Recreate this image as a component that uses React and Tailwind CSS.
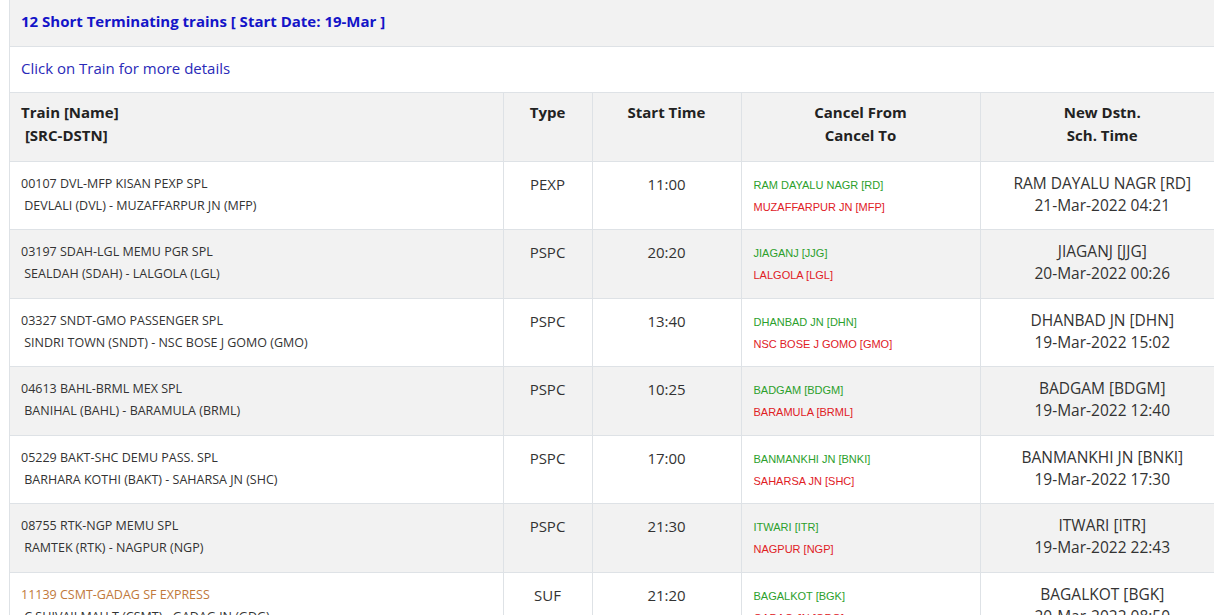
const rows = [
  ["00107 DVL-MFP KISAN PEXP SPL", "DEVLALI (DVL) - MUZAFFARPUR JN (MFP)", "PEXP", "11:00", "RAM DAYALU NAGR [RD]", "MUZAFFARPUR JN [MFP]", "RAM DAYALU NAGR [RD]", "21-Mar-2022 04:21"],
  ["03197 SDAH-LGL MEMU PGR SPL", "SEALDAH (SDAH) - LALGOLA (LGL)", "PSPC", "20:20", "JIAGANJ [JJG]", "LALGOLA [LGL]", "JIAGANJ [JJG]", "20-Mar-2022 00:26"],
  ["03327 SNDT-GMO PASSENGER SPL", "SINDRI TOWN (SNDT) - NSC BOSE J GOMO (GMO)", "PSPC", "13:40", "DHANBAD JN [DHN]", "NSC BOSE J GOMO [GMO]", "DHANBAD JN [DHN]", "19-Mar-2022 15:02"],
  ["04613 BAHL-BRML MEX SPL", "BANIHAL (BAHL) - BARAMULA (BRML)", "PSPC", "10:25", "BADGAM [BDGM]", "BARAMULA [BRML]", "BADGAM [BDGM]", "19-Mar-2022 12:40"],
  ["05229 BAKT-SHC DEMU PASS. SPL", "BARHARA KOTHI (BAKT) - SAHARSA JN (SHC)", "PSPC", "17:00", "BANMANKHI JN [BNKI]", "SAHARSA JN [SHC]", "BANMANKHI JN [BNKI]", "19-Mar-2022 17:30"],
  ["08755 RTK-NGP MEMU SPL", "RAMTEK (RTK) - NAGPUR (NGP)", "PSPC", "21:30", "ITWARI [ITR]", "NAGPUR [NGP]", "ITWARI [ITR]", "19-Mar-2022 22:43"],
  ["11139 CSMT-GADAG SF EXPRESS", "C SHIVAJI MAH T (CSMT) - GADAG JN (GDG)", "SUF", "21:20", "BAGALKOT [BGK]", "GADAG JN [GDG]", "BAGALKOT [BGK]", "20-Mar-2022 08:50"],
];

export default function App() {
  return (
    <div className="h-[615px] overflow-hidden bg-white pl-[9px] text-[#212529]" style={{ fontFamily: "'Open Sans', sans-serif" }}>
      <div className="w-[1215px] border-l border-[#dee2e6]">
        <div className="h-[47px] bg-[#f2f2f2] border-b border-[#dee2e6] px-[11px] pt-[10px] text-[15px] font-bold text-[#1414c8]">
          12 Short Terminating trains [ Start Date: 19-Mar ]
        </div>
        <div className="h-[46px] border-b border-[#dee2e6] px-[11px] pt-[10px] text-[15px] text-[#2a2ab8]">
          Click on Train for more details
        </div>
        <table className="w-full table-fixed border-collapse">
          <colgroup>
            <col className="w-[493px]" />
            <col className="w-[89px]" />
            <col className="w-[149px]" />
            <col className="w-[239px]" />
            <col />
          </colgroup>
          <thead>
            <tr className="h-[68px] bg-[#f2f2f2] text-[15px] font-bold text-[#222]">
              <th className="border-r border-b border-[#dee2e6] px-[11px] pt-[8px] text-left align-top leading-[23px]">Train [Name]<br />&nbsp;[SRC-DSTN]</th>
              <th className="border-r border-b border-[#dee2e6] pt-[8px] align-top leading-[23px]">Type</th>
              <th className="border-r border-b border-[#dee2e6] pt-[8px] align-top leading-[23px]">Start Time</th>
              <th className="border-r border-b border-[#dee2e6] pt-[8px] align-top leading-[23px]">Cancel From<br />Cancel To</th>
              <th className="border-b border-[#dee2e6] pt-[8px] align-top leading-[23px]">New Dstn.<br />Sch. Time</th>
            </tr>
          </thead>
          <tbody>
            {rows.map((r, i) => (
              <tr key={i} className={`h-[68.5px] ${i % 2 ? "bg-[#f2f2f2]" : "bg-white"}`}>
                <td className="border-r border-b border-[#dee2e6] px-[11px] pt-[11px] align-top text-[12.5px] leading-[22px]">
                  <div className={i === 6 ? "text-[#c0783a]" : "text-[#333]"}>{r[0]}</div>
                  <div className="text-[#333]">&nbsp;{r[1]}</div>
                </td>
                <td className="border-r border-b border-[#dee2e6] pt-[11px] align-top text-center text-[15px] leading-[22px] text-[#333]">{r[2]}</td>
                <td className="border-r border-b border-[#dee2e6] pt-[11px] align-top text-center text-[15px] leading-[22px] text-[#333]">{r[3]}</td>
                <td className="border-r border-b border-[#dee2e6] px-[12px] pt-[12px] align-top text-[11px] leading-[22px]" style={{ fontFamily: "'Liberation Sans', Arial, sans-serif" }}>
                  <div className="text-[#2ca02c]">{r[4]}</div>
                  <div className="text-[#e0201f]">{r[5]}</div>
                </td>
                <td className="border-b border-[#dee2e6] pt-[10px] align-top text-center text-[15.5px] leading-[22px] text-[#333]">
                  <div>{r[6]}</div>
                  <div>{r[7]}</div>
                </td>
              </tr>
            ))}
          </tbody>
        </table>
      </div>
    </div>
  );
}
